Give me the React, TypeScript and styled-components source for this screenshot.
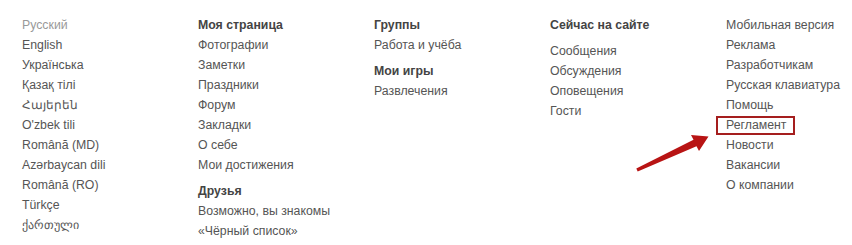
import React from 'react';
import styled, { createGlobalStyle } from 'styled-components';

const GlobalStyle = createGlobalStyle`
  html, body {
    margin: 0;
    padding: 0;
    background: #fff;
  }
  body {
    font-family: "Liberation Sans", Arial, sans-serif;
  }
`;

const Footer = styled.div`
  position: relative;
  display: grid;
  grid-template-columns: repeat(5, 176px);
  padding: 15px 0 0 22px;
  width: 852px;
  height: 245px;
  box-sizing: border-box;
  overflow: hidden;
`;

const Column = styled.div`
  display: flex;
  flex-direction: column;
`;

const Heading = styled.div<{ spaced?: boolean; gapBelow?: boolean }>`
  font-size: 12.3px;
  line-height: 20px;
  font-weight: bold;
  color: #444;
  margin-top: ${({ spaced }) => (spaced ? '6px' : '0')};
  margin-bottom: ${({ gapBelow }) => (gapBelow ? '6px' : '0')};
`;

const Link = styled.a<{ muted?: boolean }>`
  align-self: flex-start;
  font-size: 12.3px;
  line-height: 20px;
  color: ${({ muted }) => (muted ? '#999' : '#555')};
  text-decoration: none;
  white-space: nowrap;
`;

const Marked = styled.span`
  position: relative;
  &::after {
    content: '';
    position: absolute;
    left: -10px;
    right: -9px;
    top: -2px;
    bottom: -3px;
    border: 2px solid #a51e1e;
  }
`;

const Arrow = styled.svg`
  position: absolute;
  left: 630px;
  top: 125px;
  width: 90px;
  height: 55px;
`;

const languages = [
  'English',
  'Українська',
  'Қазақ тілі',
  'Հայերեն',
  "O'zbek tili",
  'Română (MD)',
  'Azərbaycan dili',
  'Română (RO)',
  'Türkçe',
  'ქართული',
];

const App: React.FC = () => {
  return (
    <>
      <GlobalStyle />
      <Footer>
        <Column>
          <Link muted>Русский</Link>
          {languages.map((l) => (
            <Link key={l}>{l}</Link>
          ))}
        </Column>
        <Column>
          <Heading>Моя страница</Heading>
          <Link>Фотографии</Link>
          <Link>Заметки</Link>
          <Link>Праздники</Link>
          <Link>Форум</Link>
          <Link>Закладки</Link>
          <Link>О себе</Link>
          <Link>Мои достижения</Link>
          <Heading spaced>Друзья</Heading>
          <Link>Возможно, вы знакомы</Link>
          <Link>«Чёрный список»</Link>
        </Column>
        <Column>
          <Heading>Группы</Heading>
          <Link>Работа и учёба</Link>
          <Heading spaced>Мои игры</Heading>
          <Link>Развлечения</Link>
        </Column>
        <Column>
          <Heading gapBelow>Сейчас на сайте</Heading>
          <Link>Сообщения</Link>
          <Link>Обсуждения</Link>
          <Link>Оповещения</Link>
          <Link>Гости</Link>
        </Column>
        <Column>
          <Link>Мобильная версия</Link>
          <Link>Реклама</Link>
          <Link>Разработчикам</Link>
          <Link>Русская клавиатура</Link>
          <Link>Помощь</Link>
          <Link>
            <Marked>Регламент</Marked>
          </Link>
          <Link>Новости</Link>
          <Link>Вакансии</Link>
          <Link>О компании</Link>
        </Column>
        <Arrow viewBox="630 125 90 55">
          <path
            d="M636.3 168.6 L693.5 139.8 L691 135 L708.5 136.5 L699 151 L696.5 146.2 L637.7 171.4 Z"
            fill="#b81414"
          />
        </Arrow>
      </Footer>
    </>
  );
};

export default App;
